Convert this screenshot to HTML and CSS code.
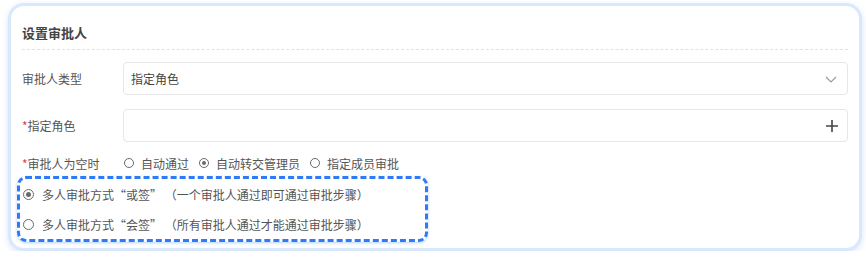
FILE: index.html
```html
<!DOCTYPE html>
<html lang="zh-CN">
<head>
    <meta charset="UTF-8">
    <title>设置审批人</title>
    <link rel="stylesheet" href="styles.css">
</head>
<body>
    <div class="card">
        <div class="card-title">设置审批人</div>

        <div class="form-row">
            <label class="form-label">审批人类型</label>
            <div class="form-input">
                <span>指定角色</span>
                <svg class="chevron" width="14" height="14" viewBox="0 0 14 14">
                    <path d="M2 5 L7 10 L12 5" fill="none" stroke="#9a9a9a" stroke-width="1.2"/>
                </svg>
            </div>
        </div>

        <div class="form-row">
            <label class="form-label"><i class="req">*</i>指定角色</label>
            <div class="form-input">
                <span></span>
                <svg class="plus" width="14" height="14" viewBox="0 0 14 14">
                    <path d="M7 1 V13 M1 7 H13" fill="none" stroke="#444" stroke-width="1.6"/>
                </svg>
            </div>
        </div>

        <div class="form-row radio-row">
            <label class="form-label"><i class="req">*</i>审批人为空时</label>
            <div class="radio-group">
                <span class="radio"><i class="dot"></i>自动通过</span>
                <span class="radio checked"><i class="dot"></i>自动转交管理员</span>
                <span class="radio"><i class="dot"></i>指定成员审批</span>
            </div>
        </div>

        <div class="multi-box">
            <div class="radio multi checked"><i class="dot"></i>多人审批方式“或签” （一个审批人通过即可通过审批步骤）</div>
            <div class="radio multi"><i class="dot"></i>多人审批方式“会签” （所有审批人通过才能通过审批步骤）</div>
        </div>
    </div>
</body>
</html>
```

FILE: styles.css
```css
/* Page */
body {
    margin: 0;
    padding: 3px 8px 0 8px;
    background: #ffffff;
    font-family: "Noto Sans CJK SC", "Noto Sans", sans-serif;
    font-size: 12px;
    color: #555555;
}

/* Card */
.card {
    width: 826px;
    height: 242px;
    padding: 0 11px;
    border: 3px solid #d9e8fc;
    border-radius: 16px;
    box-shadow: 0 2px 6px rgba(140, 180, 240, 0.35);
    background: #ffffff;
}

.card-title {
    font-size: 13px;
    font-weight: bold;
    color: #444444;
    height: 43px;
    line-height: 54px;
    border-bottom: 1px dashed #e2e2e2;
    margin-bottom: 12px;
}

/* Form rows */
.form-row {
    display: flex;
    align-items: center;
    margin-bottom: 14px;
}

.form-label {
    width: 101px;
    flex-shrink: 0;
    font-size: 12px;
    color: #555555;
}

.req {
    font-style: normal;
    color: #e0413c;
}

.form-input {
    flex: 1;
    height: 31px;
    border: 1px solid #e6e6e6;
    border-radius: 4px;
    display: flex;
    align-items: center;
    justify-content: space-between;
    padding: 0 8px 0 7px;
    color: #444444;
}

.chevron {
    margin-right: 1px;
}

.radio-row {
    margin-bottom: 0;
    height: 22px;
    margin-top: -4px;
}

.radio-group {
    display: flex;
    gap: 10px;
}

/* Radios */
.radio {
    display: flex;
    align-items: center;
    color: #555555;
}

.dot {
    width: 10px;
    height: 10px;
    border: 1px solid #6a6a6a;
    border-radius: 50%;
    margin-right: 7px;
    box-sizing: border-box;
    position: relative;
}

.checked .dot::after {
    content: "";
    position: absolute;
    left: 2px;
    top: 2px;
    width: 4px;
    height: 4px;
    border-radius: 50%;
    background: #6a6a6a;
}

.radio-group .radio:first-child {
    margin-left: 1px;
}

/* Multi approver box */
.multi-box {
    width: 402px;
    margin-left: -5px;
    margin-top: 2px;
    padding: 0 0 0 3px;
    border: 3px dashed #2f7bf5;
    border-radius: 9px;
    box-shadow: 0 1px 3px rgba(47, 123, 245, 0.35);
}

.multi {
    height: 30px;
}

.multi .dot {
    width: 11px;
    height: 11px;
    margin-right: 8px;
}

.multi.checked .dot::after {
    width: 5px;
    height: 5px;
}
```
